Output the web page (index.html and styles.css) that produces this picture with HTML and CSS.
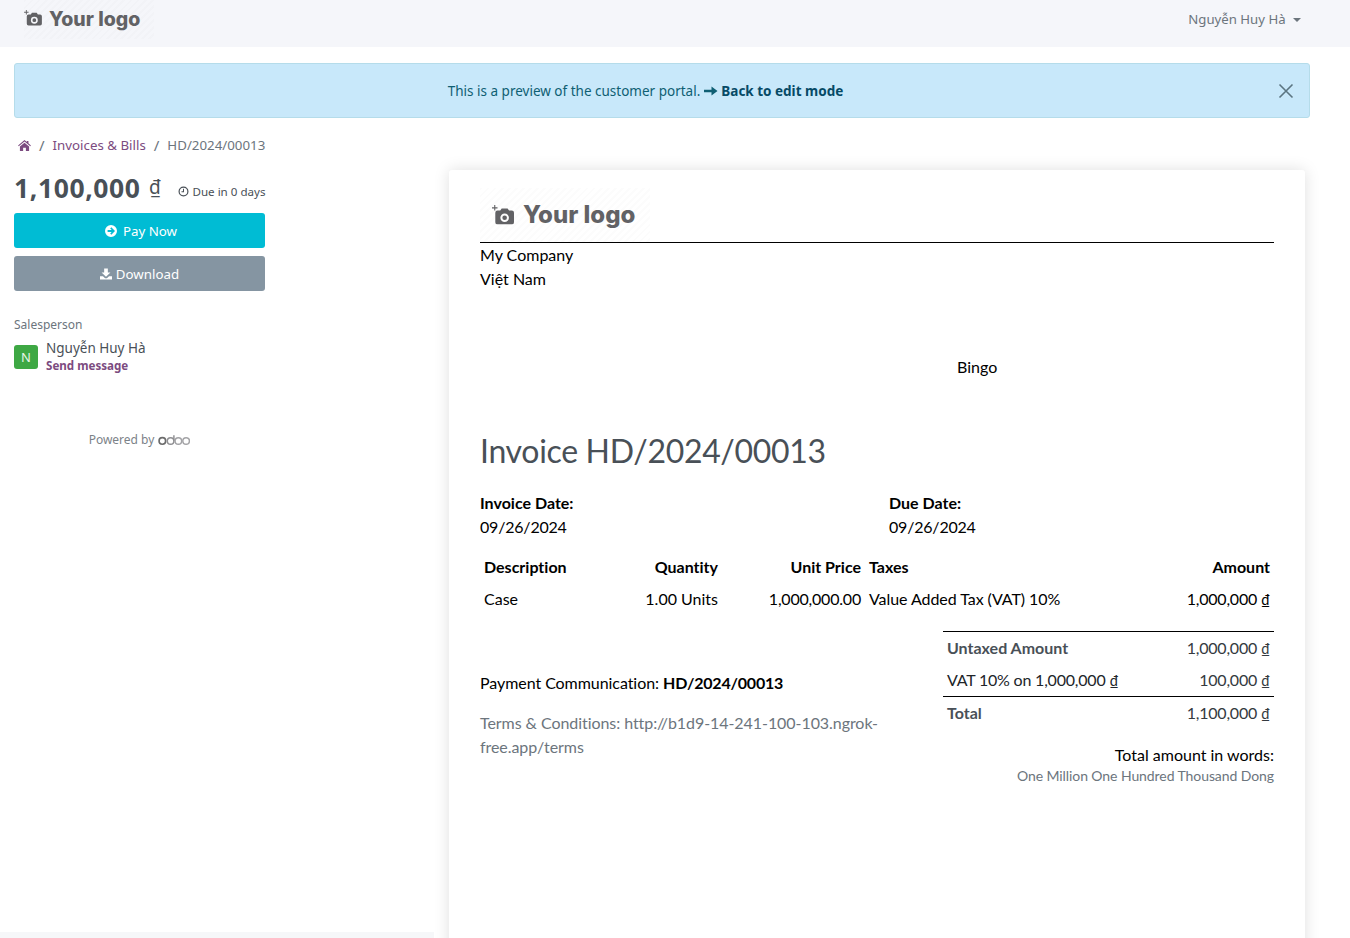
FILE: index.html
```html
<!DOCTYPE html>
<html lang="en">
<head>
  <meta charset="UTF-8" />
  <title>Invoice HD/2024/00013</title>
  <meta name="viewport" content="width=device-width, initial-scale=1" />
  <link rel="stylesheet" href="styles.css">
</head>
<body>
  <header class="topbar">
    <div class="logo logo-small">
      <svg class="logo-cam" viewBox="0 0 20 18"><path fill="currentColor" fill-rule="evenodd" d="M5 5h2.500l1.300-2h5.400l1.300 2H18a2 2 0 0 1 2 2v8.500a2 2 0 0 1-2 2H5a2 2 0 0 1-2-2V7a2 2 0 0 1 2-2zm6.500 2.600a3.900 3.900 0 1 0 0 7.800 3.900 3.900 0 0 0 0-7.800zm0 1.800a2.100 2.100 0 1 1 0 4.200 2.100 2.100 0 0 1 0-4.200z"/><path fill="currentColor" d="M2 0h1v2h2v1H3v2H2V3H0V2h2z"/></svg>
      <span>Your logo</span>
    </div>
    <div class="user-menu">Nguyễn Huy Hà <span class="caret"></span></div>
  </header>

  <div class="preview-alert">
    <span>This is a preview of the customer portal.
      <svg class="arrow-ico" viewBox="0 0 14 10"><path fill="currentColor" d="M0 3.700h7.500V.5L13.500 5l-6 4.500V6.300H0z"/></svg>
      <a href="#" class="back-link">Back to edit mode</a></span>
    <svg class="close-ico" viewBox="0 0 16 16"><path d="M1.500 1.500l13 13M14.500 1.500l-13 13" stroke="currentColor" stroke-width="1.600" fill="none"/></svg>
  </div>

  <nav class="crumbs">
    <a href="#"><svg class="home-ico" viewBox="0 0 14 12"><path fill="currentColor" d="M7 0l2.500 2.100V1h1.800v2.600L14 5.900l-.7.8L7 1.500.7 6.700 0 5.900zM2 7l5-4.100L12 7v5H8.500V8.500h-3V12H2z"/></svg></a>
    <span class="sep">/</span>
    <a href="#">Invoices &amp; Bills</a>
    <span class="sep">/</span>
    <span class="crumb-now">HD/2024/00013</span>
  </nav>

  <div class="main">
    <aside class="side">
      <div class="amount-row">
        <span class="amount">1,100,000 <span class="cur">₫</span></span>
        <span class="due">
          <svg class="clock-ico" viewBox="0 0 12 12"><circle cx="6" cy="6" r="4.800" fill="none" stroke="currentColor" stroke-width="1.300"/><path d="M6 3v3.300H3.800" fill="none" stroke="currentColor" stroke-width="1.100"/></svg>
          Due in 0 days</span>
      </div>
      <a href="#" class="btn btn-pay">
        <svg class="btn-ico" viewBox="0 0 12 12"><path fill="currentColor" fill-rule="evenodd" d="M6 0a6 6 0 1 1 0 12A6 6 0 0 1 6 0zm.3 2.300L5.200 3.400l1.500 1.500H2.600v2.200h4.100L5.200 8.600l1.100 1.100L10 6z"/></svg>
        Pay Now</a>
      <a href="#" class="btn btn-dl">
        <svg class="btn-ico" viewBox="0 0 13 12"><path fill="currentColor" d="M4.500 0h4v4.500h2.800L6.500 9 1.700 4.500h2.800zM0 8.500h3.200L5.500 10.500h2l2.300-2H13V12H0z"/></svg>
        Download</a>

      <div class="sales-label">Salesperson</div>
      <div class="sales-row">
        <div class="avatar">N</div>
        <div>
          <div class="sales-name">Nguyễn Huy Hà</div>
          <a href="#" class="sales-msg">Send message</a>
        </div>
      </div>

      <div class="powered">Powered by
        <svg class="odoo" viewBox="0 0 33 11">
          <circle cx="4.500" cy="6" r="3.400" fill="none" stroke="#6b6b6b" stroke-width="1.700"/>
          <circle cx="13" cy="6" r="3.400" fill="none" stroke="#8f8f92" stroke-width="1.500"/>
          <path d="M16.400 0v6" stroke="#8f8f92" stroke-width="1.500"/>
          <circle cx="21" cy="6" r="3.400" fill="none" stroke="#a3a3a6" stroke-width="1.500"/>
          <circle cx="29" cy="6" r="3.400" fill="none" stroke="#a3a3a6" stroke-width="1.500"/>
        </svg>
      </div>
      <div class="side-strip"></div>
    </aside>

    <section class="invoice">
      <div class="logo logo-big">
        <svg class="logo-cam" viewBox="0 0 20 18"><path fill="currentColor" fill-rule="evenodd" d="M5 5h2.500l1.300-2h5.400l1.300 2H18a2 2 0 0 1 2 2v8.500a2 2 0 0 1-2 2H5a2 2 0 0 1-2-2V7a2 2 0 0 1 2-2zm6.500 2.600a3.900 3.900 0 1 0 0 7.800 3.900 3.900 0 0 0 0-7.800zm0 1.800a2.100 2.100 0 1 1 0 4.200 2.100 2.100 0 0 1 0-4.200z"/><path fill="currentColor" d="M2 0h1v2h2v1H3v2H2V3H0V2h2z"/></svg>
        <span>Your logo</span>
      </div>
      <div class="company">My Company<br>Việt Nam</div>
      <div class="partner">Bingo</div>

      <h1 class="inv-title">Invoice HD/2024/00013</h1>

      <div class="dates">
        <div class="date-col"><strong>Invoice Date:</strong><br><span class="tight">09/26/2024</span></div>
        <div class="date-col"><strong>Due Date:</strong><br><span class="tight">09/26/2024</span></div>
      </div>

      <table class="lines">
        <thead>
          <tr>
            <th class="c-desc">Description</th>
            <th class="c-qty num">Quantity</th>
            <th class="c-price num">Unit Price</th>
            <th class="c-tax">Taxes</th>
            <th class="num">Amount</th>
          </tr>
        </thead>
        <tbody>
          <tr>
            <td>Case</td>
            <td class="num">1.00 Units</td>
            <td class="num"><span class="tight">1,000,000.00</span></td>
            <td><span class="tight-sm">Value Added Tax (VAT) 10%</span></td>
            <td class="num"><span class="tight">1,000,000</span> <span class="d">₫</span></td>
          </tr>
        </tbody>
      </table>

      <div class="bottom">
        <div class="notes">
          <p class="pay-ref"><span class="tight-sm">Payment Communication:</span> <strong class="tight">HD/2024/00013</strong></p>
          <p class="terms">Terms &amp; Conditions: http://b1d9-14-241-100-103.ngrok-free.app/terms</p>
        </div>
        <div class="totals">
          <table class="totals-table">
            <tr class="t-first"><td><strong>Untaxed Amount</strong></td><td class="num"><span class="tight">1,000,000</span> <span class="d">₫</span></td></tr>
            <tr><td class="t-dark"><span class="tight">VAT 10% on 1,000,000</span> <span class="d">₫</span></td><td class="num"><span class="tight">100,000</span> <span class="d">₫</span></td></tr>
            <tr class="t-total"><td><strong>Total</strong></td><td class="num"><span class="tight">1,100,000</span> <span class="d">₫</span></td></tr>
          </table>
          <div class="words-label">Total amount in words:</div>
          <div class="words">One Million One Hundred Thousand Dong</div>
        </div>
      </div>
    </section>
  </div>
</body>
</html>
```

FILE: styles.css
```css
* { box-sizing: border-box; }
html, body { height: 938px; overflow: hidden; }
body { margin: 0; background: #fff; color: #495057; font-family: "Noto Sans", sans-serif; font-size: 13px; }
a { text-decoration: none; color: #7c4b80; }
svg { display: inline-block; }

.topbar {
  height: 47px; background: #f5f6fa; padding: 0 49px 0 24px;
  display: flex; justify-content: space-between; align-items: flex-start;
}
.logo {
  display: flex; align-items: center; color: #626265; font-family: "Inter", sans-serif; font-weight: 800;
  background: repeating-linear-gradient(135deg, rgba(0,0,0,0.012) 0 2px, transparent 2px 5px);
}
.logo-small { font-size: 19.500px; height: 39px; gap: 7px; padding-bottom: 1px; width: 130px; }
.logo-small .logo-cam { width: 18px; height: 16px; margin-bottom: 3px; }
.logo-big { font-size: 24px; height: 54px; gap: 9px; padding: 0 0 0 12px; width: 170px; }
.logo-big .logo-cam { width: 22px; height: 20px; margin-bottom: 1px; }
.user-menu { margin-top: 10px; font-size: 13.200px; line-height: 18px; color: #6c757d; }
.caret {
  display: inline-block; margin-left: 4px; vertical-align: 2px;
  border-top: 4px solid #6c757d; border-left: 4px solid transparent; border-right: 4px solid transparent;
}

.preview-alert {
  margin: 16px 40px 0 14px; height: 55px; position: relative; padding-right: 33px;
  background: #c8e8fa; border: 1px solid #b5dcea; border-radius: 3px;
  display: flex; align-items: center; justify-content: center;
  color: #0f5f73; font-size: 13.500px;
}
.back-link { color: #064a66; font-weight: 700; }
.arrow-ico { width: 14px; height: 10px; }
.close-ico { position: absolute; right: 15px; top: 19px; width: 16px; height: 16px; color: #5b7581; }

.crumbs {
  margin: 17px 0 0 18px; height: 20px; display: flex; align-items: center; gap: 8px;
  font-size: 13.300px; color: #6c757d;
}
.home-ico { width: 13px; height: 11px; display: block; }
.sep { font-size: 15px; }

.main { display: flex; align-items: flex-start; margin-top: 15px; }
.side { width: 449px; padding: 0 184px 0 14px; position: relative; height: 768px; flex: none; }
.amount-row { height: 38px; margin-top: -1px; display: flex; align-items: center; white-space: nowrap; }
.amount { font-size: 26.500px; font-weight: 700; color: #495057; letter-spacing: 0.6px; }
.cur { font-size: 19px; font-weight: 400; vertical-align: 4px; margin-left: 1px; }
.due { font-size: 11.600px; margin-left: 17px; margin-top: 6px; color: #495057; }
.clock-ico { width: 11px; height: 11px; vertical-align: -1px; }
.btn {
  display: flex; align-items: center; justify-content: center; gap: 6px;
  height: 35px; width: 251px; border-radius: 3px; color: #fff; font-size: 13.300px;
}
.btn-pay { background: #00bcd4; margin-top: 6px; padding-left: 3px; }
.btn-dl { background: #8595a2; margin-top: 8px; gap: 4px; }
.btn-ico { width: 12px; height: 12px; }
.sales-label { margin-top: 25px; font-size: 12px; color: #6c757d; line-height: 17px; }
.sales-row { display: flex; gap: 8px; margin-top: 6px; align-items: flex-start; }
.avatar {
  width: 24px; height: 24px; border-radius: 3px; background: #3ea844; color: #e8f5e9; margin-top: 6px;
  font-size: 13px; display: flex; align-items: center; justify-content: center;
}
.sales-name { font-size: 13.500px; line-height: 18px; color: #495057; }
.sales-msg { font-size: 11.600px; font-weight: 700; line-height: 16px; display: block; margin-top: 1px; }
.powered {
  width: 251px; margin-top: 57px; font-size: 12px; color: #7c8288;
  display: flex; justify-content: center; align-items: center; gap: 4px; line-height: 17px;
}
.odoo { width: 32px; height: 11px; margin-top: 2px; }
.side-strip { position: absolute; left: 0; width: 434px; height: 6px; top: 762px; background: #f6f7f9; }

.invoice {
  width: 856px; height: 800px; flex: none; padding: 18px 31px 0;
  background: #fff; box-shadow: 0 0 16px rgba(0,0,0,0.13); border-radius: 3px;
  font-family: "Lato", sans-serif; font-size: 16px; line-height: 24px; color: #000;
  font-variant-ligatures: none;
}
.tight { letter-spacing: -0.2px; }
.tight-sm { letter-spacing: -0.06px; }
.d { font-size: 14.500px; line-height: 1; }
.company { border-top: 1px solid #000; }
.partner { margin: 64px 0 0 477px; }
.inv-title { margin: 50px 0 0; font-size: 32px; letter-spacing: -0.33px; line-height: 44px; font-weight: 400; color: #495057; }
.dates { display: flex; margin-top: 18px; }
.date-col { width: 409px; flex: none; }

.lines { border-collapse: collapse; width: 100%; margin-top: 12px; }
.lines th, .lines td { padding: 4px; height: 32px; text-align: left; white-space: nowrap; }
.lines th { font-weight: 700; }
.lines .num, .totals-table .num { text-align: right; }
.c-desc { width: 131px; }
.c-qty { width: 111px; }
.c-price { width: 143px; }
.c-tax { width: 0; }

.bottom { display: flex; justify-content: space-between; margin-top: 16px; }
.notes { width: 410px; padding-top: 40px; }
.pay-ref { margin: 0; }
.terms { margin: 16px 0 0; color: #6c757d; letter-spacing: -0.06px; }
.totals { width: 331px; }
.totals-table { width: 100%; border-collapse: collapse; color: #495057; border-top: 1px solid #000; }
.totals-table td { padding: 4px; height: 32px; }
.t-dark { color: #212529; }
.totals-table .num { color: #343a40; }
.t-total td { border-top: 1px solid #000; height: 33px; }
.words-label { text-align: right; margin-top: 13px; }
.words { text-align: right; font-size: 14px; letter-spacing: -0.08px; line-height: 18px; color: #6c757d; }
```
